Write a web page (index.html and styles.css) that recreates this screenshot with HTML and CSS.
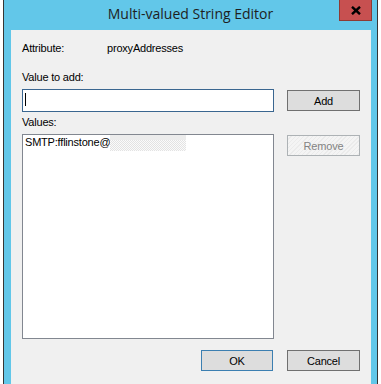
FILE: index.html
```html
<!DOCTYPE html>
<html lang="en">
<head>
    <meta charset="UTF-8">
    <meta name="viewport" content="width=device-width, initial-scale=1.0">
    <title>Multi-valued String Editor</title>
    <link rel="stylesheet" href="styles.css">
</head>
<body>
    <div class="window">
        <div class="titlebar">
            <span class="title">Multi-valued String Editor</span>
            <button type="button" class="close-button" aria-label="Close">
                <svg width="10" height="9" viewBox="0 0 10 9">
                    <path d="M1 0.8 L9 8.2 M9 0.8 L1 8.2" stroke="#000" stroke-width="2.4" fill="none"/>
                </svg>
            </button>
        </div>
        <div class="content">
            <div class="attr-row">
                <span class="attr-label">Attribute:</span>
                <span class="attr-value">proxyAddresses</span>
            </div>
            <div class="field-label label-add">Value to add:</div>
            <div class="field-row">
                <div class="text-input"><span class="caret"></span></div>
                <button type="button" class="btn">Add</button>
            </div>
            <div class="field-label label-values">Values:</div>
            <div class="field-row">
                <div class="list-box">
                    <div class="list-item">
                        <span>SMTP:fflinstone@</span>
                        <span class="redacted"></span>
                    </div>
                </div>
                <button type="button" class="btn" disabled>Remove</button>
            </div>
            <div class="button-bar">
                <button type="button" class="btn btn-default">OK</button>
                <button type="button" class="btn">Cancel</button>
            </div>
        </div>
    </div>
</body>
</html>
```

FILE: styles.css
```css
* {
    box-sizing: border-box;
}
html, body {
    margin: 0;
    height: 100%;
    overflow: hidden;
    background: #fff;
}
body {
    font-family: 'Liberation Sans', Arial, sans-serif;
    font-size: 11px;
    color: #000;
}
.window {
    margin-left: 3px;
    width: 375px;
    min-height: 100%;
    background: #62c7e9;
    border-left: 1px solid #353535;
    border-right: 1px solid #353535;
    display: flex;
    flex-direction: column;
}
.titlebar {
    position: relative;
    height: 30px;
    padding-top: 4px;
    text-align: center;
    font-family: 'Open Sans', 'Noto Sans', sans-serif;
    font-size: 14px;
    line-height: 20px;
    color: #1e1e1e;
}
.close-button {
    position: absolute;
    top: 0;
    right: 5px;
    width: 33px;
    height: 21px;
    padding: 0;
    background: #c75050;
    border: 1px solid #8e3b33;
    border-top: none;
    display: flex;
    align-items: center;
    justify-content: center;
}
.content {
    flex: 1;
    margin: 0 6px 0 7px;
    background: #f0f0f0;
    padding: 12px 11px 0 11px;
    line-height: 13px;
    letter-spacing: -0.2px;
}
.attr-row {
    display: flex;
}
.attr-label {
    width: 85px;
}
.field-label {
    display: block;
}
.label-add {
    margin-top: 16px;
}
.label-values {
    margin-top: 4px;
}
.field-row {
    display: flex;
    justify-content: space-between;
    align-items: flex-start;
    margin-top: 5px;
}
.text-input {
    width: 252px;
    height: 23px;
    background: #fff;
    border: 1px solid #3a6690;
    padding: 3px 0 0 2px;
}
.caret {
    display: block;
    width: 1px;
    height: 13px;
    background: #000;
}
.list-box {
    width: 252px;
    height: 205px;
    background: #fff;
    border: 1px solid #828790;
    padding: 1px 0 0 2px;
}
.list-item {
    display: flex;
    align-items: flex-start;
}
.redacted {
    width: 76px;
    height: 16px;
    margin-top: -1px;
    background:
        linear-gradient(#ececec, #ececec) top left / 100% 5px no-repeat,
        repeating-conic-gradient(#e3e3e3 0 25%, #fbfbfb 0 50%) 0 0 / 2px 2px;
}
.btn {
    width: 73px;
    height: 21px;
    margin-top: 1px;
    padding: 0;
    font-family: 'Liberation Sans', Arial, sans-serif;
    font-size: 11px;
    letter-spacing: -0.2px;
    color: #000;
    background: #dddddd;
    border: 1px solid #707070;
}
.btn:disabled {
    color: #838383;
    border-color: #adb2b5;
    background: repeating-linear-gradient(135deg, #f4f4f4 0 2px, #ebebeb 2px 3px);
}
.btn-default {
    width: 72px;
    border-color: #3c7fb1;
}
.button-bar {
    display: flex;
    justify-content: flex-end;
    gap: 14px;
    margin-top: 11px;
}
.button-bar .btn {
    margin-top: 0;
}
```
